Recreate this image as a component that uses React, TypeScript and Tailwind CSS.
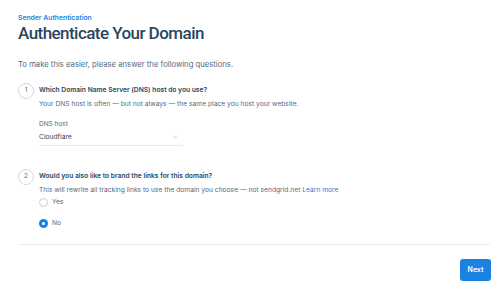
import { ChevronDown } from 'lucide-react';

function Step({ n }: { n: number }) {
  return (
    <div className="w-[16px] h-[16px] shrink-0 rounded-full border border-[#d4dadf] flex items-center justify-center text-[6.5px] text-[#546b81]">
      {n}
    </div>
  );
}

function Radio({ checked, label }: { checked?: boolean; label: string }) {
  return (
    <label className="flex items-center gap-[4px] h-[9px] text-[6.7px] text-[#546b81]">
      {checked ? (
        <span className="w-[9px] h-[9px] rounded-full bg-[#1a82e2] flex items-center justify-center">
          <span className="w-[3px] h-[3px] rounded-full bg-white" />
        </span>
      ) : (
        <span className="w-[9px] h-[9px] rounded-full border border-[#c8cfd6] bg-white" />
      )}
      {label}
    </label>
  );
}

export default function App() {
  return (
    <div className="w-[500px] h-[303px] bg-white px-[18px] pt-[13px]" style={{ fontFamily: 'Inter, "Noto Sans", sans-serif' }}>
      <div className="text-[6.8px] font-semibold text-[#1a82e2] leading-[9px]">Sender Authentication</div>
      <h1 className="text-[17px] font-medium text-[#294661] leading-[20px] mt-[1px] tracking-[-0.55px] font-[Roboto,sans-serif]">Authenticate Your Domain</h1>

      <p className="text-[7.7px] text-[#546b81] mt-[17px] leading-[10px]">To make this easier, please answer the following questions.</p>

      <div className="flex gap-[5px] mt-[13px]">
        <Step n={1} />
        <div className="pt-[2px]">
          <div className="text-[6.7px] font-semibold text-[#294661] leading-[10px]">Which Domain Name Server (DNS) host do you use?</div>
          <div className="text-[6.7px] text-[#546b81] mt-[4px] leading-[10px]">Your DNS host is often — but not always — the same place you host your website.</div>
          <div className="mt-[11px] w-[144px]">
            <div className="text-[6.5px] text-[#546b81] leading-[9px]">DNS host</div>
            <div className="flex items-center justify-between border-b border-[#e9ecef] pb-[3px] mt-[3px]">
              <span className="text-[6.7px] text-[#294661] leading-[10px]">Cloudflare</span>
              <ChevronDown className="w-[6px] h-[6px] text-[#9aa8b5] mr-[5px]" strokeWidth={2} />
            </div>
          </div>
        </div>
      </div>

      <div className="flex gap-[5px] mt-[23px]">
        <Step n={2} />
        <div className="pt-[2px]">
          <div className="text-[6.7px] font-semibold text-[#294661] leading-[10px]">Would you also like to brand the links for this domain?</div>
          <div className="text-[6.7px] text-[#546b81] mt-[4px] leading-[10px]">
            This will rewrite all tracking links to use the domain you choose — not sendgrid.net <span className="text-[#1a82e2]">Learn more</span>
          </div>
          <div className="flex flex-col gap-[12px] mt-[3px]">
            <Radio label="Yes" />
            <Radio checked label="No" />
          </div>
        </div>
      </div>

      <div className="border-t border-[#e9ecef] mt-[16px] mr-[-8px]" />

      <div className="flex justify-end mt-[14px] mr-[-9px]">
        <button className="w-[31px] h-[22px] rounded-[3px] bg-[#1a82e2] text-white text-[7px] font-semibold">Next</button>
      </div>
    </div>
  );
}
